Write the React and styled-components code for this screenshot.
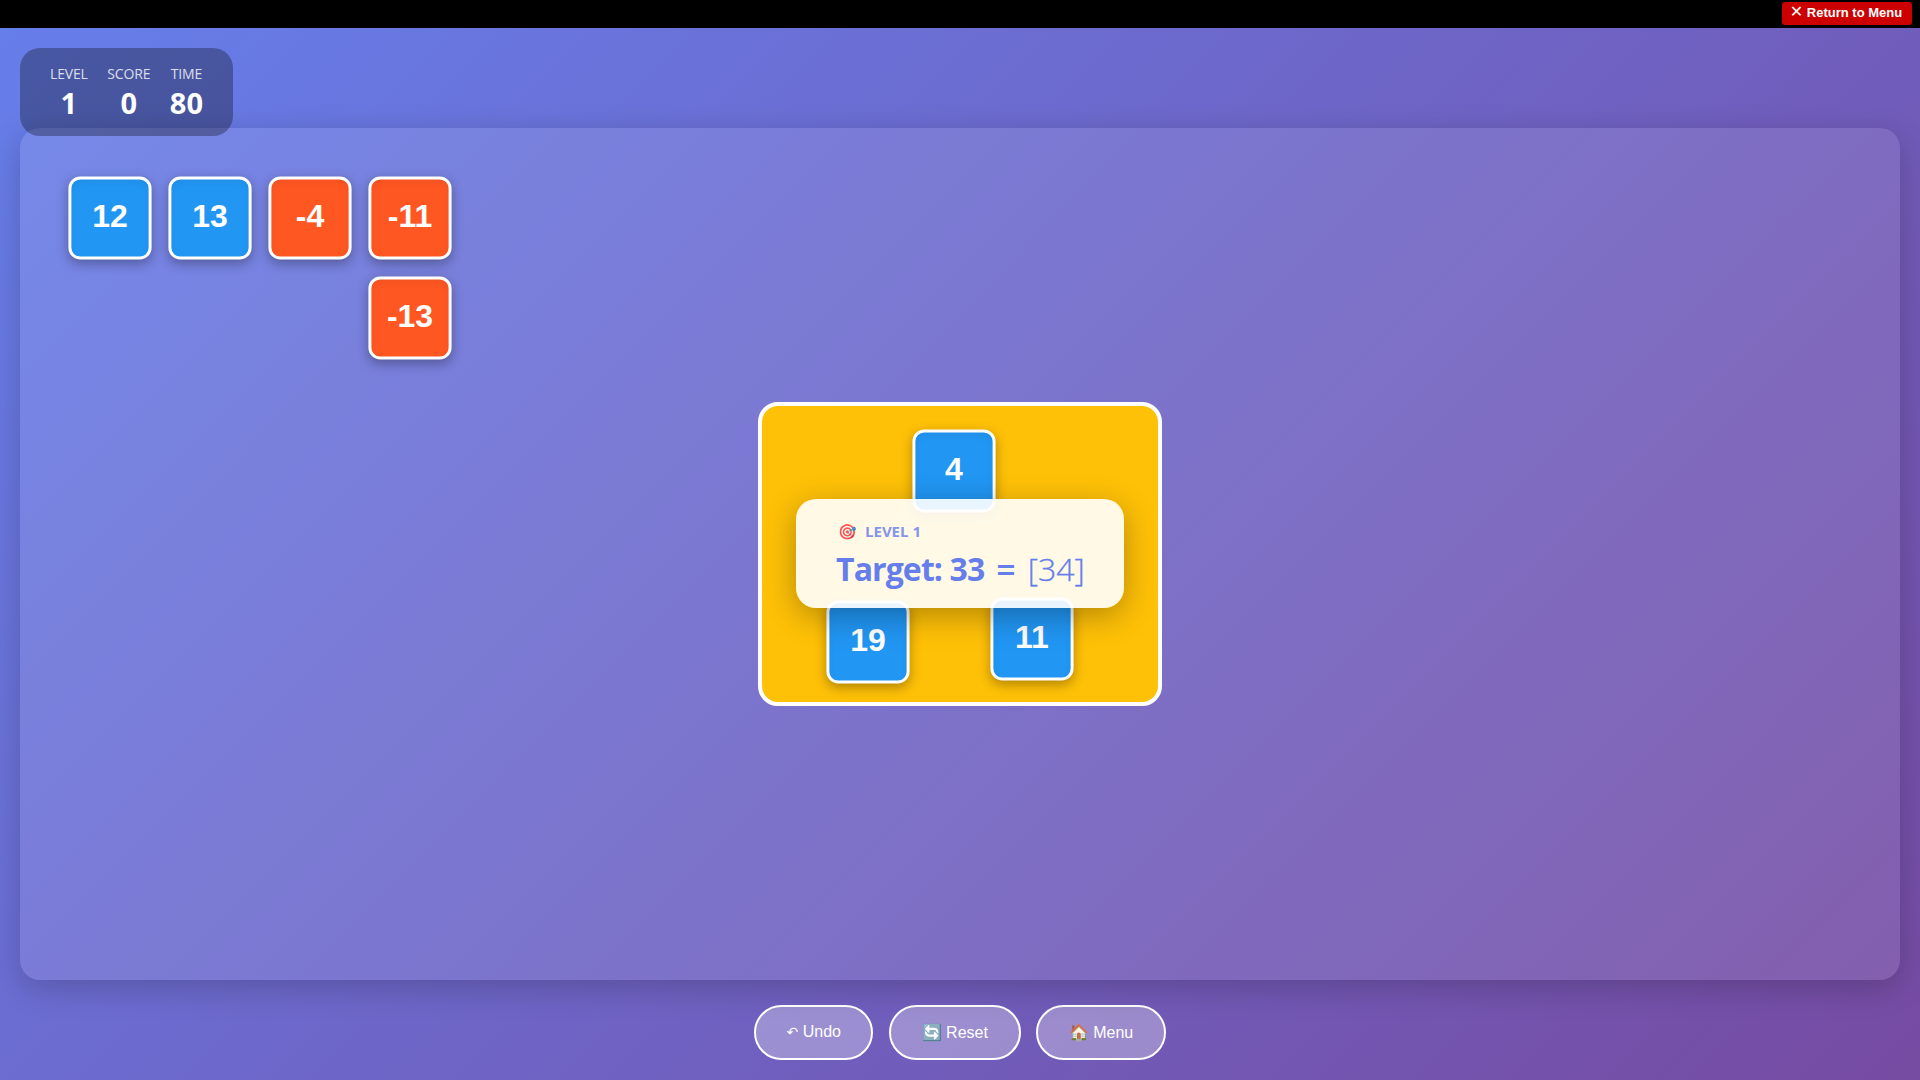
import styled, { createGlobalStyle } from 'styled-components'

const GlobalStyle = createGlobalStyle`
  html, body {
    margin: 0;
    padding: 0;
    height: 100%;
    overflow: hidden;
  }
  * {
    box-sizing: border-box;
  }
`

const UI_FONT = `"Open Sans", "Noto Sans", sans-serif`
const ARIAL = `"Liberation Sans", Arial, sans-serif`

const tray = [
  { value: '12', kind: 'plus' },
  { value: '13', kind: 'plus' },
  { value: '-4', kind: 'minus' },
  { value: '-11', kind: 'minus' },
  { value: '-13', kind: 'minus', col: 4 },
]

const placed = [
  { value: '4', x: 150, y: 23 },
  { value: '19', x: 64, y: 194 },
  { value: '11', x: 228, y: 191 },
]

function App() {
  return (
    <>
      <GlobalStyle />
      <Screen>
        <TopBar>
          <ReturnButton><CloseMark>✕</CloseMark> Return to Menu</ReturnButton>
        </TopBar>
        <Game>
          <Hud>
            <Stat>
              <StatLabel>LEVEL</StatLabel>
              <StatValue>1</StatValue>
            </Stat>
            <Stat>
              <StatLabel>SCORE</StatLabel>
              <StatValue>0</StatValue>
            </Stat>
            <Stat>
              <StatLabel>TIME</StatLabel>
              <StatValue>80</StatValue>
            </Stat>
          </Hud>
          <Board>
            <Tray>
              {tray.map(({ value, kind, col }) => (
                <Card key={value} $kind={kind} $col={col}>{value}</Card>
              ))}
            </Tray>
            <TargetZone>
              {placed.map(({ value, x, y }) => (
                <PlacedCard key={value} $kind="plus" style={{ left: x, top: y }}>{value}</PlacedCard>
              ))}
              <TargetPopup>
                <LevelLine><LevelIcon>🎯</LevelIcon>LEVEL 1</LevelLine>
                <TargetLine>
                  <span>Target: 33</span>
                  <Equals>=</Equals>
                  <Answer>[34]</Answer>
                </TargetLine>
              </TargetPopup>
            </TargetZone>
          </Board>
          <Controls>
            <ControlButton $w={119.3} $up><UndoMark>↶</UndoMark> Undo</ControlButton>
            <ControlButton $w={131.7}>🔄 Reset</ControlButton>
            <ControlButton $w={129.7}>🏠 Menu</ControlButton>
          </Controls>
        </Game>
      </Screen>
    </>
  )
}

export default App

const Screen = styled.div`
  display: flex;
  flex-direction: column;
  width: 100%;
  height: 100vh;
`

const TopBar = styled.div`
  display: flex;
  justify-content: flex-end;
  align-items: flex-start;
  height: 28px;
  padding: 2px 8px 0 0;
  background: #000;
`

const ReturnButton = styled.button`
  width: 130px;
  height: 23px;
  padding: 0 2px 2px 0;
  border: none;
  border-radius: 3px;
  background: #cc0000;
  color: #fff;
  font-family: ${ARIAL};
  font-size: 13px;
  font-weight: 700;
  white-space: nowrap;
`

const CloseMark = styled.span`
  font-family: "DejaVu Sans", sans-serif;
  font-size: 16px;
  line-height: 0;
`

const Game = styled.div`
  flex: 1;
  display: flex;
  flex-direction: column;
  padding: 20px;
  background: linear-gradient(135deg, #667eea 0%, #764ba2 100%);
`

const Hud = styled.div`
  position: relative;
  z-index: 2;
  display: flex;
  align-self: flex-start;
  gap: 19.5px;
  width: 213px;
  height: 88px;
  margin-bottom: -8px;
  padding: 16px 30px;
  border-radius: 20px;
  background: rgba(0, 0, 0, 0.3);
  color: #fff;
`

const Stat = styled.div`
  display: flex;
  flex-direction: column;
  align-items: center;
`

const StatLabel = styled.div`
  font-family: ${UI_FONT};
  font-size: 14px;
  line-height: 19px;
  letter-spacing: -0.15px;
  opacity: 0.8;
`

const StatValue = styled.div`
  margin-top: 1px;
  font-family: ${UI_FONT};
  font-size: 29px;
  font-weight: 700;
  line-height: 38px;
`

const Board = styled.div`
  position: relative;
  height: 852px;
  padding: 48px;
  border-radius: 20px;
  background: rgba(255, 255, 255, 0.1);
  box-shadow: 0 8px 32px rgba(0, 0, 0, 0.2);
`

const Tray = styled.div`
  display: grid;
  grid-template-columns: repeat(4, 84px);
  grid-auto-rows: 84px;
  gap: 16px;
`

const Card = styled.div`
  display: flex;
  align-items: center;
  justify-content: center;
  width: 84px;
  height: 84px;
  padding-bottom: 3px;
  grid-column: ${({ $col }) => $col || 'auto'};
  border: 3px solid #fff;
  border-radius: 12px;
  background: ${({ $kind }) => ($kind === 'minus' ? '#ff5722' : '#2196f3')};
  box-shadow: 0 4px 12px rgba(0, 0, 0, 0.3), inset 0 4px 8px rgba(0, 0, 0, 0.05);
  color: #fff;
  font-family: ${ARIAL};
  font-size: 32.3px;
  font-weight: 700;
  transform: scale(0.99);
`

const PlacedCard = styled(Card)`
  position: absolute;
`

const TargetZone = styled.div`
  position: absolute;
  top: 50%;
  left: 50%;
  width: 404px;
  height: 304px;
  transform: translate(-50%, -50%);
  border: 4px solid #fff;
  border-radius: 20px;
  background: #ffc107;
`

const TargetPopup = styled.div`
  position: absolute;
  top: 93px;
  left: 34px;
  width: 328px;
  height: 109px;
  padding: 22px 40px;
  border-radius: 20px;
  background: rgba(255, 255, 255, 0.9);
  box-shadow: 0 8px 32px rgba(0, 0, 0, 0.3);
  color: #667eea;
  font-family: ${UI_FONT};
`

const LevelLine = styled.div`
  display: flex;
  align-items: center;
  gap: 8px;
  padding-left: 2px;
  font-size: 15px;
  font-weight: 700;
  line-height: 20px;
  opacity: 0.8;
`

const LevelIcon = styled.span`
  font-size: 15px;
`

const TargetLine = styled.div`
  display: flex;
  gap: 12px;
  margin-top: 6px;
  font-size: 32px;
  font-weight: 700;
  letter-spacing: -0.9px;
  line-height: 44px;
  white-space: nowrap;
`

const Equals = styled.span`
  font-size: 34px;
  font-weight: 600;
  letter-spacing: 0;
`

const Answer = styled.span`
  font-weight: 300;
  letter-spacing: 0;
  -webkit-text-stroke: 0.3px #667eea;
`

const Controls = styled.div`
  display: flex;
  justify-content: center;
  gap: 15.5px;
  margin-top: 25px;
`

const ControlButton = styled.button`
  width: ${({ $w }) => $w}px;
  height: 55px;
  padding: 0 0 ${({ $up }) => ($up ? '2px' : '0')};
  border: 2px solid #fff;
  border-radius: 27.5px;
  background: rgba(255, 255, 255, 0.3);
  color: #fff;
  font-family: ${ARIAL};
  font-size: 16px;
`

const UndoMark = styled.span`
  font-family: "DejaVu Sans", sans-serif;
  font-size: 14px;
`
